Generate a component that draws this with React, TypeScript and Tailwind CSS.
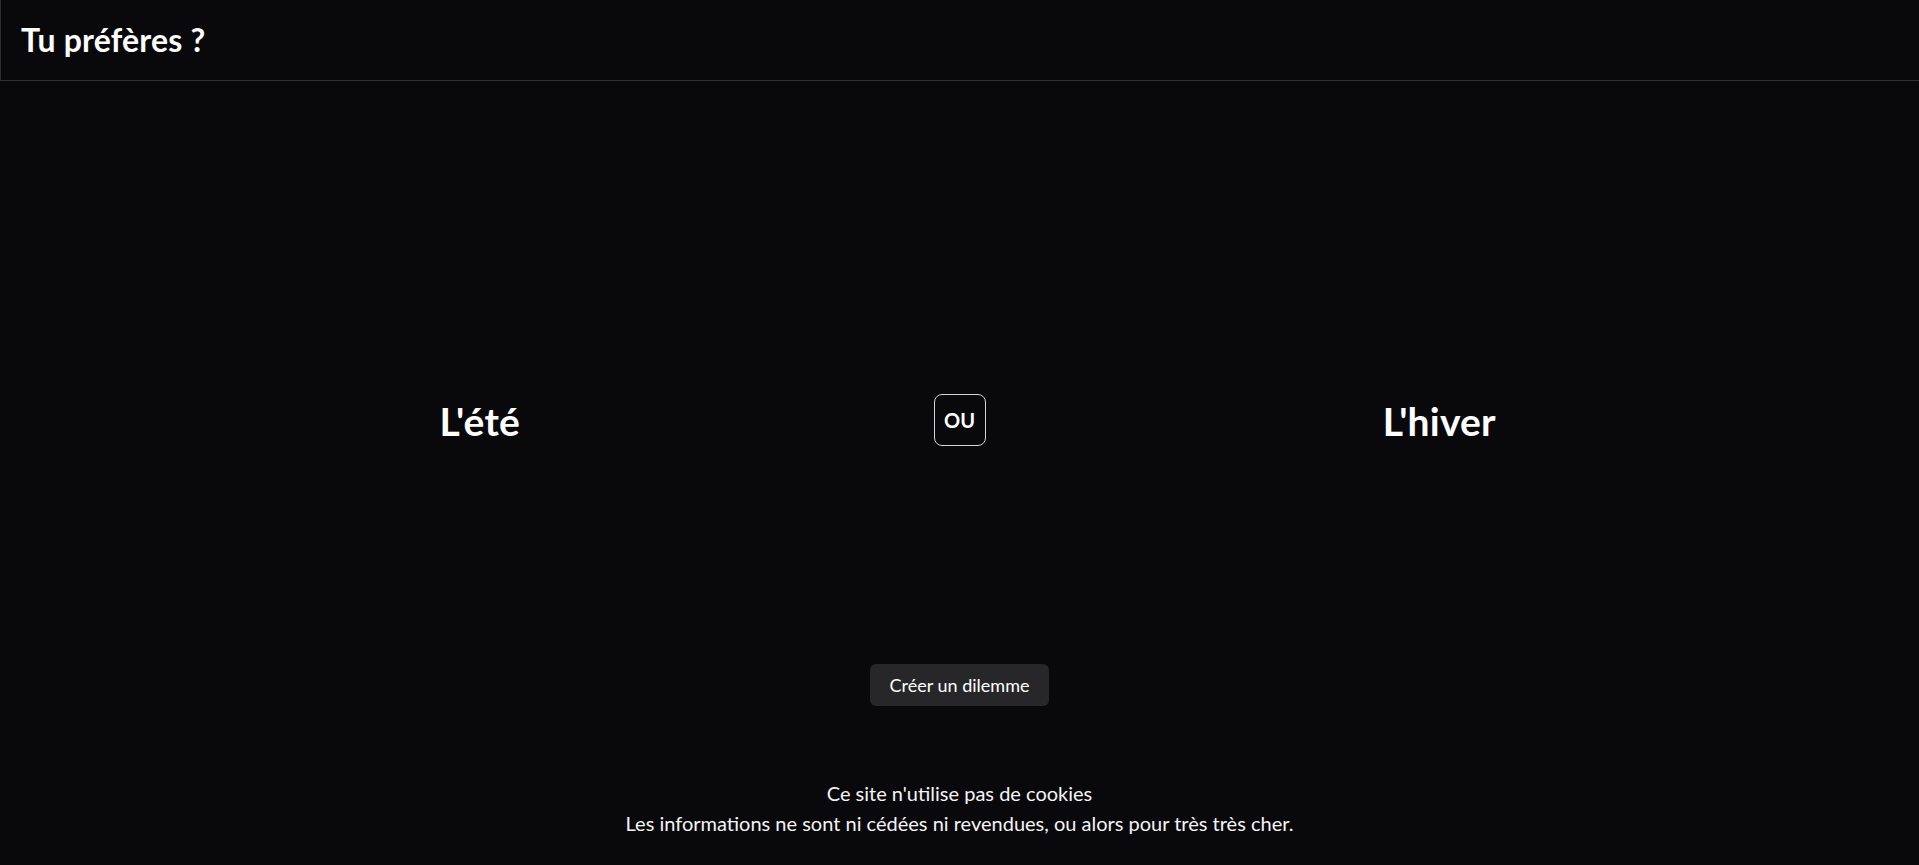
import React from "react";

export default function App() {
  return (
    <div
      className="min-h-screen w-full bg-[#09090b] text-white flex flex-col"
      style={{ fontFamily: "Lato, 'Liberation Sans', sans-serif" }}
    >
      <header className="h-[81px] border-l border-b border-[#303033] flex items-center pl-[20px]">
        <h1 className="text-[32px] font-bold tracking-[0.2px]">Tu préfères ?</h1>
      </header>

      <main className="flex flex-col items-center pt-[313px]">
        <div className="relative w-full grid grid-cols-2 items-center h-[52px]">
          <button className="flex justify-center">
            <span className="text-[39px] font-bold tracking-[0.2px] -translate-y-[2px]">L'été</span>
          </button>
          <button className="flex justify-center">
            <span className="text-[39px] font-bold tracking-[0.2px] -translate-y-[2px]">L'hiver</span>
          </button>
          <div className="absolute left-1/2 top-0 -translate-x-1/2 h-[52px] w-[52px] rounded-lg border border-[#d4d4d8] flex items-center justify-center">
            <span className="text-[20px] font-bold">OU</span>
          </div>
        </div>

        <button className="mt-[218px] h-[42px] px-5 rounded-md bg-[#27272a] text-[18px] text-white">
          Créer un dilemme
        </button>

        <footer className="mt-[72px] flex flex-col items-center text-[20px] leading-[30px] text-[#f4f4f5]">
          <p>Ce site n'utilise pas de cookies</p>
          <p>Les informations ne sont ni cédées ni revendues, ou alors pour très très cher.</p>
        </footer>
      </main>
    </div>
  );
}
